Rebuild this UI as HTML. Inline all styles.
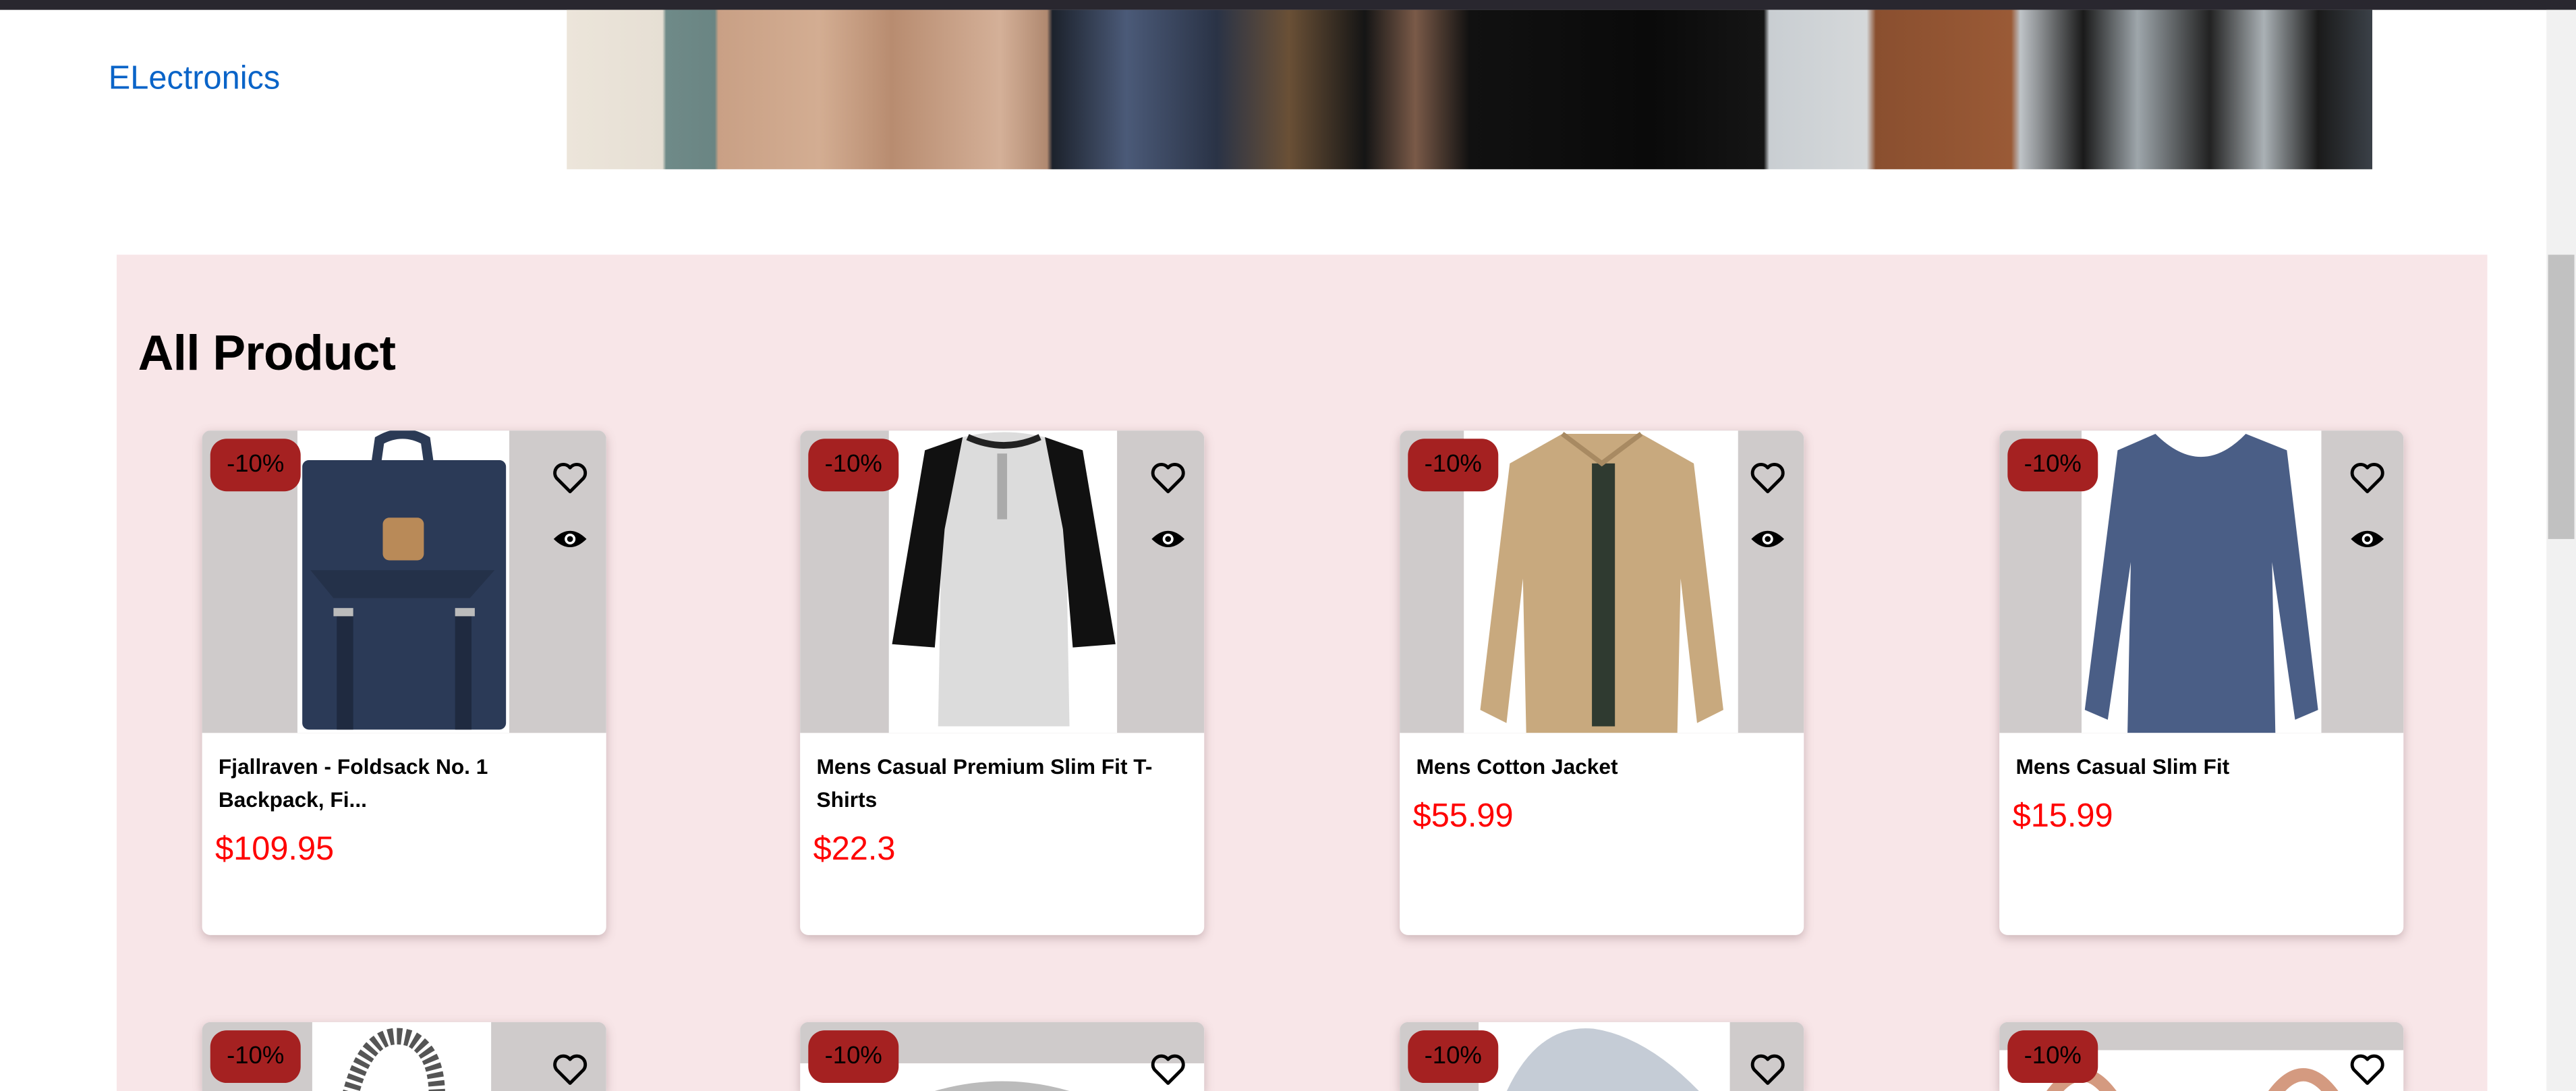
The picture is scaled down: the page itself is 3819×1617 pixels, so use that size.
<!DOCTYPE html>
<html><head><meta charset="utf-8">
<style>
html,body{margin:0;padding:0;background:#fff;overflow:hidden;width:3819px;height:1617px}
#w{position:absolute;left:0;top:0;width:1568px;height:664px;transform:scale(2.43559);transform-origin:0 0;font-family:"Liberation Sans",sans-serif;background:#fff;overflow:hidden}
.top{position:absolute;left:0;top:0;width:1568px;height:6px;background:#29272f}
.sb{position:absolute;left:1550px;top:6px;width:18px;height:658px;background:#f1f1f1}
.thumb{position:absolute;left:1551px;top:155px;width:16px;height:173px;background:#c1c1c1}
.el{position:absolute;left:66px;top:37px;font-size:20px;color:#0a64c8}
.ban{position:absolute;left:345px;top:6px;width:1099px;height:97px;background:linear-gradient(90deg,#ece5da 0,#e6dfd4 5.3%,#6f8a88 5.5%,#6a8583 8.2%,#c9a085 8.4%,#d3ad92 14%,#b88c70 18%,#d4b098 24%,#b08970 26.6%,#1c222c 26.9%,#4b5a78 31%,#2a3346 36%,#6a5036 40%,#151515 44.2%,#7a5a48 47%,#111 50%,#0a0a0a 60%,#151515 66.3%,#c9ced2 66.6%,#d5d8da 72%,#8a4f2f 72.5%,#9a5a36 80%,#bfc4c8 80.5%,#1a1a1a 84%,#9ea6ab 87%,#222 91%,#aab1b5 94%,#1a1a1a 97%,#3b4148 100%)}
.pink{position:absolute;left:71px;top:155px;width:1443px;height:509px;background:#f8e6e8}
h1{position:absolute;left:84px;top:199px;margin:0;font-size:30px;font-weight:bold;color:#000;letter-spacing:-0.3px}
.card{position:absolute;width:246px;height:307px;background:#fff;border-radius:5px;box-shadow:0 2px 6px rgba(120,90,95,.35);overflow:hidden}
.card.r2{height:42px;border-radius:5px 5px 0 0}
.img{position:absolute;left:0;top:0;width:246px;height:184px;background:#cfcbcb}
.badge{position:absolute;left:5px;top:5px;width:55px;height:32px;background:#a52121;border-radius:10px;font-size:15px;color:#000;text-align:center;line-height:32px}
.heart{position:absolute;left:213px;top:19px}
.eye{position:absolute;left:214px;top:59px}
.t{position:absolute;left:10px;top:195px;width:220px;font-size:13px;font-weight:bold;line-height:20px;color:#000}
.p{position:absolute;left:8px;font-size:20px;color:#f00}
</style></head><body><div id="w">
<div class="top"></div>
<div class="el">ELectronics</div>
<div class="ban"></div>
<div class="pink"></div>
<h1>All Product</h1>

<div class="card" style="left:123px;top:262px">
 <div class="img"><svg style="position:absolute;left:58px;top:0" width="129" height="184"><rect width="129" height="184" fill="#fff"/><path d="M48 20 L50 6 Q64 -2 78 6 L80 20" fill="none" stroke="#2b3a55" stroke-width="6"/><rect x="3" y="18" width="124" height="164" rx="4" fill="#2b3a57"/><path d="M8 85 L120 85 L105 102 L22 102Z" fill="#243149"/><rect x="52" y="53" width="25" height="26" rx="4" fill="#b98a58"/><rect x="24" y="110" width="10" height="72" fill="#1f2a40"/><rect x="96" y="110" width="10" height="72" fill="#1f2a40"/><rect x="22" y="108" width="12" height="5" fill="#bbb"/><rect x="96" y="108" width="12" height="5" fill="#bbb"/></svg></div>
 <div class="badge">-10%</div>
 <svg class="heart" width="22" height="20" viewBox="0 0 24 22"><path d="M12 20 L3 11 A5.2 5.2 0 0 1 12 4 A5.2 5.2 0 0 1 21 11Z" fill="none" stroke="#000" stroke-width="2.2" stroke-linejoin="round"/></svg>
 <svg class="eye" width="20" height="14" viewBox="0 0 20 14"><path d="M0 7 Q10 -3 20 7 Q10 17 0 7Z" fill="#000"/><circle cx="10" cy="7" r="3.3" fill="#fff"/><circle cx="10" cy="7" r="1.8" fill="#000"/></svg>
 <div class="t">Fjallraven - Foldsack No. 1 Backpack, Fi...</div>
 <div class="p" style="top:244px">$109.95</div>
</div>

<div class="card" style="left:487px;top:262px">
 <div class="img"><svg style="position:absolute;left:54px;top:0" width="139" height="184"><rect width="139" height="184" fill="#fff"/><path d="M45 4 Q70 -2 95 4 L118 12 L138 130 L112 132 L108 70 L110 180 L30 180 L32 70 L28 132 L2 130 L22 12Z" fill="#dcdcdc"/><path d="M95 4 L118 12 L138 130 L112 132 L106 60Z" fill="#111"/><path d="M45 4 L22 12 L2 130 L28 132 L34 60Z" fill="#111"/><path d="M48 4 Q70 14 92 4" fill="none" stroke="#222" stroke-width="4"/><rect x="66" y="14" width="6" height="40" fill="#aaa"/></svg></div>
 <div class="badge">-10%</div>
 <svg class="heart" width="22" height="20" viewBox="0 0 24 22"><path d="M12 20 L3 11 A5.2 5.2 0 0 1 12 4 A5.2 5.2 0 0 1 21 11Z" fill="none" stroke="#000" stroke-width="2.2" stroke-linejoin="round"/></svg>
 <svg class="eye" width="20" height="14" viewBox="0 0 20 14"><path d="M0 7 Q10 -3 20 7 Q10 17 0 7Z" fill="#000"/><circle cx="10" cy="7" r="3.3" fill="#fff"/><circle cx="10" cy="7" r="1.8" fill="#000"/></svg>
 <div class="t">Mens Casual Premium Slim Fit T-Shirts</div>
 <div class="p" style="top:244px">$22.3</div>
</div>

<div class="card" style="left:852px;top:262px">
 <div class="img"><svg style="position:absolute;left:39px;top:0" width="167" height="184"><rect width="167" height="184" fill="#fff"/><path d="M60 2 L108 2 L140 20 L158 170 L142 178 L132 90 L130 184 L38 184 L36 90 L26 178 L10 170 L28 20Z" fill="#c8a97e"/><rect x="78" y="20" width="14" height="160" fill="#2f3a30"/><path d="M60 2 L84 20 L108 2" fill="none" stroke="#a88a62" stroke-width="3"/></svg></div>
 <div class="badge">-10%</div>
 <svg class="heart" width="22" height="20" viewBox="0 0 24 22"><path d="M12 20 L3 11 A5.2 5.2 0 0 1 12 4 A5.2 5.2 0 0 1 21 11Z" fill="none" stroke="#000" stroke-width="2.2" stroke-linejoin="round"/></svg>
 <svg class="eye" width="20" height="14" viewBox="0 0 20 14"><path d="M0 7 Q10 -3 20 7 Q10 17 0 7Z" fill="#000"/><circle cx="10" cy="7" r="3.3" fill="#fff"/><circle cx="10" cy="7" r="1.8" fill="#000"/></svg>
 <div class="t">Mens Cotton Jacket</div>
 <div class="p" style="top:224px">$55.99</div>
</div>

<div class="card" style="left:1217px;top:262px">
 <div class="img"><svg style="position:absolute;left:50px;top:0" width="146" height="184"><rect width="146" height="184" fill="#fff"/><path d="M45 2 Q73 30 100 2 L125 12 L144 170 L130 176 L116 80 L118 184 L28 184 L30 80 L16 176 L2 170 L22 12Z" fill="#4a5e86"/></svg></div>
 <div class="badge">-10%</div>
 <svg class="heart" width="22" height="20" viewBox="0 0 24 22"><path d="M12 20 L3 11 A5.2 5.2 0 0 1 12 4 A5.2 5.2 0 0 1 21 11Z" fill="none" stroke="#000" stroke-width="2.2" stroke-linejoin="round"/></svg>
 <svg class="eye" width="20" height="14" viewBox="0 0 20 14"><path d="M0 7 Q10 -3 20 7 Q10 17 0 7Z" fill="#000"/><circle cx="10" cy="7" r="3.3" fill="#fff"/><circle cx="10" cy="7" r="1.8" fill="#000"/></svg>
 <div class="t">Mens Casual Slim Fit</div>
 <div class="p" style="top:224px">$15.99</div>
</div>

<div class="card r2" style="left:123px;top:622px">
 <div class="img"><svg style="position:absolute;left:67px;top:0" width="109" height="42"><rect width="109" height="42" fill="#fff"/><path d="M20 60 Q30 0 60 10 Q80 20 75 60" fill="none" stroke="#555" stroke-width="10" stroke-dasharray="3 2"/></svg></div>
 <div class="badge">-10%</div>
 <svg class="heart" width="22" height="20" viewBox="0 0 24 22"><path d="M12 20 L3 11 A5.2 5.2 0 0 1 12 4 A5.2 5.2 0 0 1 21 11Z" fill="none" stroke="#000" stroke-width="2.2" stroke-linejoin="round"/></svg>
</div>
<div class="card r2" style="left:487px;top:622px">
 <div class="img"><svg style="position:absolute;left:0;top:25px" width="246" height="17"><rect width="246" height="17" fill="#fff"/><path d="M40 40 Q123 -10 206 40" fill="none" stroke="#bbb" stroke-width="8"/></svg></div>
 <div class="badge">-10%</div>
 <svg class="heart" width="22" height="20" viewBox="0 0 24 22"><path d="M12 20 L3 11 A5.2 5.2 0 0 1 12 4 A5.2 5.2 0 0 1 21 11Z" fill="none" stroke="#000" stroke-width="2.2" stroke-linejoin="round"/></svg>
</div>
<div class="card r2" style="left:852px;top:622px">
 <div class="img"><svg style="position:absolute;left:48px;top:0" width="153" height="42"><rect width="153" height="42" fill="#fff"/><path d="M10 60 Q30 0 70 4 Q110 10 150 60Z" fill="#c5ccd6"/></svg></div>
 <div class="badge">-10%</div>
 <svg class="heart" width="22" height="20" viewBox="0 0 24 22"><path d="M12 20 L3 11 A5.2 5.2 0 0 1 12 4 A5.2 5.2 0 0 1 21 11Z" fill="none" stroke="#000" stroke-width="2.2" stroke-linejoin="round"/></svg>
</div>
<div class="card r2" style="left:1217px;top:622px">
 <div class="img"><svg style="position:absolute;left:0;top:17px" width="246" height="25"><rect width="246" height="25" fill="#fff"/><path d="M30 30 Q50 0 70 30" fill="none" stroke="#d49a80" stroke-width="8"/><path d="M165 30 Q185 0 205 30" fill="none" stroke="#d49a80" stroke-width="8"/></svg></div>
 <div class="badge">-10%</div>
 <svg class="heart" width="22" height="20" viewBox="0 0 24 22"><path d="M12 20 L3 11 A5.2 5.2 0 0 1 12 4 A5.2 5.2 0 0 1 21 11Z" fill="none" stroke="#000" stroke-width="2.2" stroke-linejoin="round"/></svg>
</div>

<div class="sb"></div>
<div class="thumb"></div>
</div></body></html>
